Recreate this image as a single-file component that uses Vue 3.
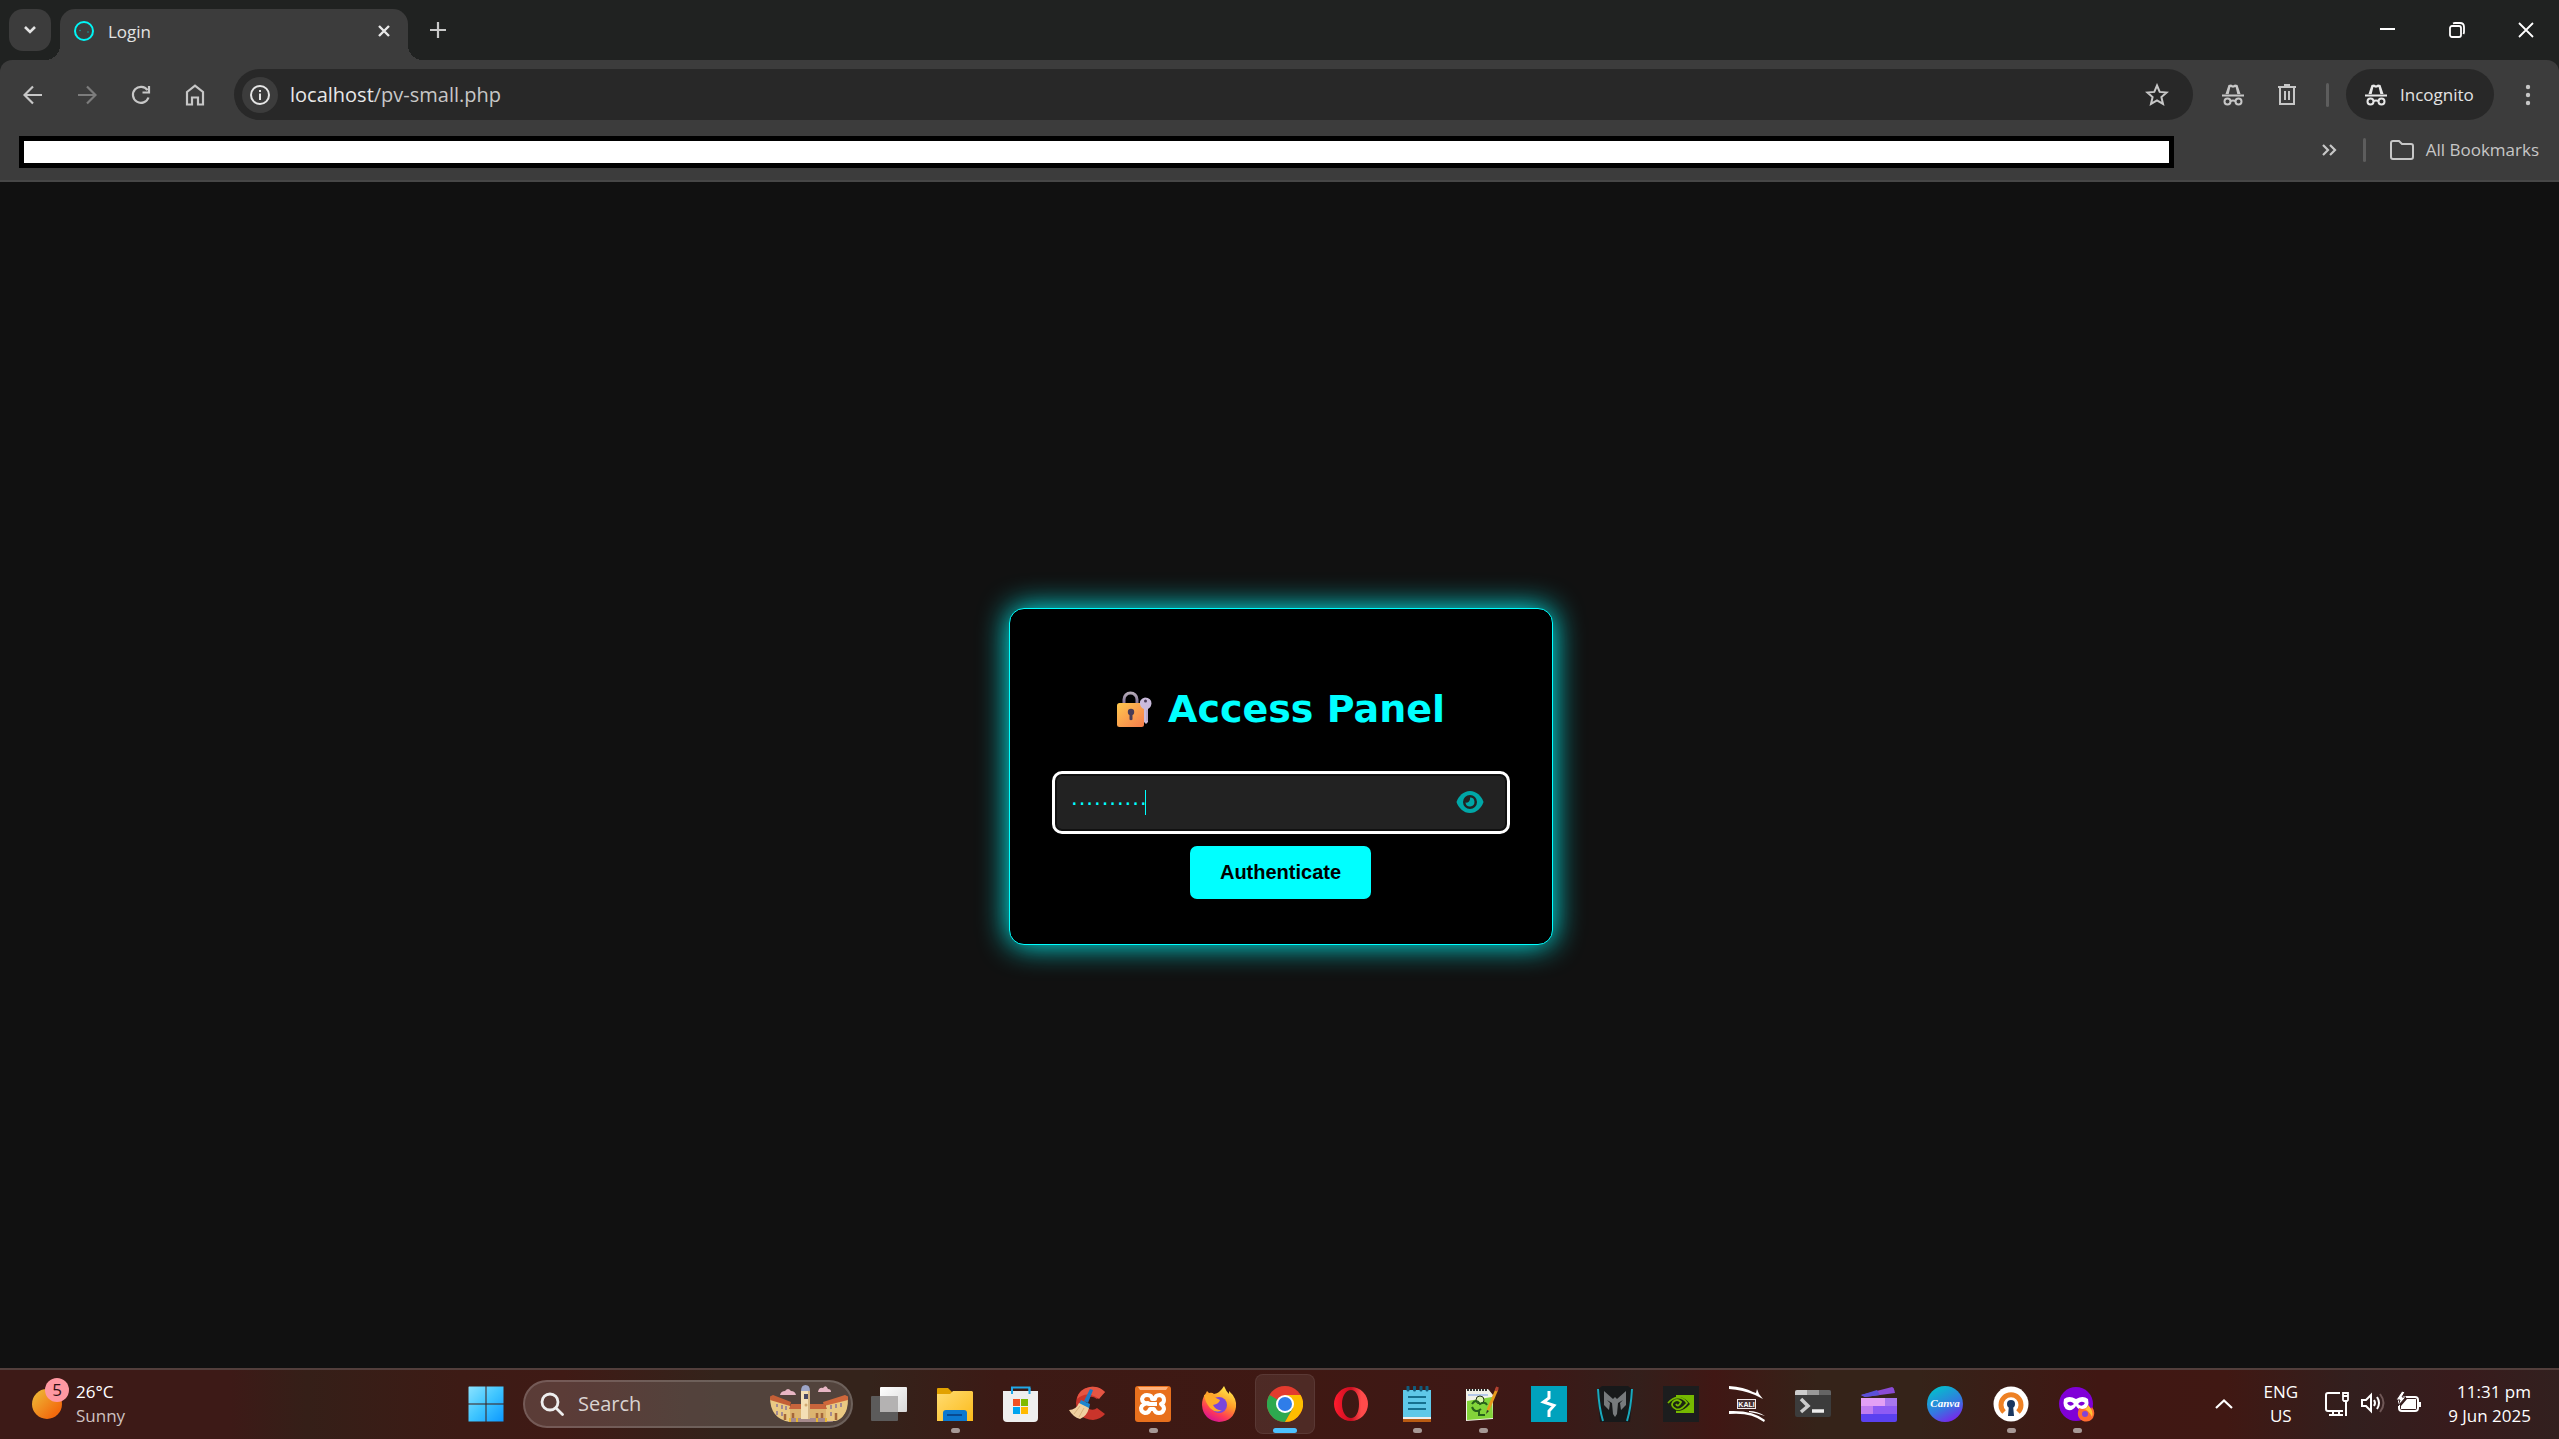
<script setup>
import { ref } from 'vue'

const passcode = ref('··········')
const apps = [
  { id: 'taskview', name: 'Task View' },
  { id: 'explorer', name: 'File Explorer', open: true },
  { id: 'store', name: 'Microsoft Store' },
  { id: 'ccleaner', name: 'CCleaner' },
  { id: 'xampp', name: 'XAMPP', open: true },
  { id: 'firefox', name: 'Firefox' },
  { id: 'chrome', name: 'Chrome', active: true },
  { id: 'opera', name: 'Opera' },
  { id: 'notepad', name: 'Notepad', open: true },
  { id: 'npp', name: 'Notepad++', open: true },
  { id: 'burp', name: 'Burp Suite' },
  { id: 'predator', name: 'PredatorSense' },
  { id: 'nvidia', name: 'NVIDIA' },
  { id: 'kali', name: 'Kali Linux' },
  { id: 'terminal', name: 'Terminal' },
  { id: 'clipchamp', name: 'Clipchamp' },
  { id: 'canva', name: 'Canva' },
  { id: 'openvpn', name: 'OpenVPN', open: true },
  { id: 'private', name: 'Firefox Private', open: true },
]
</script>

<template>
  <div class="screen">
    <header class="tabs">
      <button class="tab-search" aria-label="Search tabs">
        <svg width="14" height="10" viewBox="0 0 14 10"><path d="M2 2l5 5 5-5" fill="none" stroke="#e3e3e3" stroke-width="2.6" /></svg>
      </button>
      <div class="tab">
        <svg width="22" height="22" viewBox="0 0 22 22">
          <circle cx="11" cy="11" r="9" fill="none" stroke="#00f5f5" stroke-width="2" />
          <circle cx="7" cy="10.500" r="0.800" fill="#14a3a3" /><circle cx="15" cy="12" r="0.800" fill="#14a3a3" />
        </svg>
        <span class="tab-title">Login</span>
        <button class="plain" aria-label="Close tab">
          <svg width="14" height="14" viewBox="0 0 14 14"><path d="M2 2l10 10M12 2L2 12" stroke="#e8e8e8" stroke-width="2.400" /></svg>
        </button>
      </div>
      <button class="plain new-tab" aria-label="New tab">
        <svg width="16" height="16" viewBox="0 0 16 16"><path d="M8 0v16M0 8h16" stroke="#c9c9c9" stroke-width="2.200" /></svg>
      </button>
      <div class="window-buttons">
        <button class="plain" aria-label="Minimize"><svg width="16" height="16" viewBox="0 0 16 16"><path d="M0 7h15" stroke="#fff" stroke-width="2" /></svg></button>
        <button class="plain" aria-label="Restore">
          <svg width="16" height="16" viewBox="0 0 16 16" fill="none" stroke="#fff" stroke-width="1.800"><rect x="1" y="4" width="11" height="11" rx="2" /><path d="M4 1.500Q5 1 6 1h5q4 0 4 4v5q0 1-.6 2" /></svg>
        </button>
        <button class="plain" aria-label="Close"><svg width="16" height="16" viewBox="0 0 16 16"><path d="M1 1l14 14M15 1L1 15" stroke="#fff" stroke-width="1.800" /></svg></button>
      </div>
    </header>

    <nav class="toolbar">
      <div class="nav-icons">
        <button class="plain" aria-label="Back"><svg width="20" height="20" viewBox="0 0 20 20" fill="none" stroke="#c7c7c7" stroke-width="2.200"><path d="M19 10H2M10 1.500L1.500 10l8.500 8.500" /></svg></button>
        <button class="plain" aria-label="Forward"><svg width="20" height="20" viewBox="0 0 20 20" fill="none" stroke="#7c7c7c" stroke-width="2.200"><path d="M1 10h17M10 1.500l8.500 8.500-8.500 8.500" /></svg></button>
        <button class="plain" aria-label="Reload"><svg width="20" height="20" viewBox="0 0 20 20" fill="none" stroke="#c7c7c7" stroke-width="2.200"><path d="M17.500 12.500A8 8 0 1 1 16.500 5.200M18 1v6.500h-6.500" /></svg></button>
        <button class="plain" aria-label="Home"><svg width="20" height="22" viewBox="0 0 20 22" fill="none" stroke="#c7c7c7" stroke-width="2.200"><path d="M2 8l8-6.300L18 8v12.500h-5v-7H7v7H2z" /></svg></button>
      </div>
      <label class="omnibox">
        <span class="site-info">
          <svg width="22" height="22" viewBox="0 0 22 22"><circle cx="11" cy="11" r="9" fill="none" stroke="#e6e6e6" stroke-width="2" /><path d="M11 9.500V16M11 6v2" stroke="#e6e6e6" stroke-width="2" /></svg>
        </span>
        <span class="url"><b>localhost</b>/pv-small.php</span>
        <svg width="24" height="24" viewBox="0 0 24 24"><path d="M12 2.500l2.700 6.400 7 .6-5.300 4.600 1.600 6.800-6-3.600-6 3.600 1.600-6.800L2.300 9.500l7-.6z" fill="none" stroke="#c7c7c7" stroke-width="2" /></svg>
      </label>
      <div class="tools">
        <svg width="24" height="22" viewBox="0 0 24 22" fill="#c7c7c7"><path d="M1 10.500h22v2H1zM4.500 10l3-9L10 .5l2 1 2-1 2.500.5 3 9h-3.200L14.600 3l-2.600.8L9.400 3 7.700 10z" /><g fill="none" stroke="#c7c7c7" stroke-width="2"><circle cx="6.500" cy="17.500" r="3" /><circle cx="17.500" cy="17.500" r="3" /><path d="M9.500 17q2.500-1.200 5 0" /></g></svg>
        <svg width="20" height="24" viewBox="0 0 20 24" fill="none" stroke="#c7c7c7" stroke-width="2"><path d="M1 4h18M7 2h6M3 4v17h14V4M8 8v9M12 8v9" /></svg>
      </div>
      <i class="rule"></i>
      <button class="incognito">
        <svg width="24" height="22" viewBox="0 0 24 22" fill="#e8e8e8"><path d="M1 10.500h22v2H1zM4.500 10l3-9L10 .5l2 1 2-1 2.500.5 3 9h-3.200L14.600 3l-2.600.8L9.400 3 7.700 10z" /><g fill="none" stroke="#e8e8e8" stroke-width="2"><circle cx="6.500" cy="17.500" r="3" /><circle cx="17.500" cy="17.500" r="3" /><path d="M9.500 17q2.500-1.200 5 0" /></g></svg>
        Incognito
      </button>
      <button class="plain menu" aria-label="Menu"><svg width="6" height="24" viewBox="0 0 6 24" fill="#c7c7c7"><circle cx="3" cy="4" r="2.200" /><circle cx="3" cy="12" r="2.200" /><circle cx="3" cy="20" r="2.200" /></svg></button>
    </nav>

    <div class="bookmarks">
      <div class="bookmark-items"></div>
      <svg class="more" width="16" height="14" viewBox="0 0 16 14"><path d="M2 2l5 5-5 5M9 2l5 5-5 5" fill="none" stroke="#c7c7c7" stroke-width="2.200" /></svg>
      <i class="rule"></i>
      <a href="#" class="all-bookmarks">
        <svg width="26" height="20" viewBox="0 0 26 20"><path d="M2 3q0-2 2-2h6l3 3h9q2 0 2 2v11q0 2-2 2H4q-2 0-2-2z" fill="none" stroke="#c7c7c7" stroke-width="2" /></svg>
        All Bookmarks
      </a>
    </div>

    <main class="page">
      <form class="card" @submit.prevent>
        <h1>
          <svg width="36" height="36" viewBox="0 0 36 36">
            <defs>
              <linearGradient id="lockBody" x1="0" y1="0" x2="1" y2="1"><stop offset="0" stop-color="#ffc84e" /><stop offset="1" stop-color="#f57c4d" /></linearGradient>
              <linearGradient id="shackle" x1="0" y1="0" x2="0" y2="1"><stop offset="0" stop-color="#b5aab7" /><stop offset="1" stop-color="#7c6b91" /></linearGradient>
            </defs>
            <path d="M8 13V8.500a6.500 6.500 0 0 1 13 0V13" fill="none" stroke="url(#shackle)" stroke-width="3" />
            <rect x="1" y="12" width="27" height="24" rx="2.500" fill="url(#lockBody)" />
            <circle cx="15" cy="21" r="3.200" fill="#483b57" /><path d="M13.500 22h3v6.500q-1.500 1.500-3 0z" fill="#483b57" />
            <path d="M24 13q-1-5 5-6.500 6.500.5 6.500 6-.5 4-3.500 5.500V31l-2 2-2-2V18Q24.500 16.500 24 13z" fill="#cabbdc" /><circle cx="29.500" cy="10" r="1.500" fill="#4a3c58" /><path d="M31 19v11" stroke="#a899bd" />
          </svg>
          <span>Access Panel</span>
        </h1>
        <div class="field">
          <input v-model="passcode" type="text" aria-label="Password" autocomplete="off" />
          <i class="caret"></i>
          <button type="button" class="plain eye" aria-label="Show password">
            <svg width="28" height="24" viewBox="0 0 28 24"><path d="M14 1C7.500 1 2.500 6 .5 12c2 6 7 11 13.500 11s11.500-5 13.500-11C25.500 6 20.500 1 14 1z" fill="#00a7a7" /><circle cx="14" cy="12" r="7" fill="#222" /><path d="M14 7.500a4.500 4.500 0 1 1-4.500 5c3 .8 5-2 4.500-5z" fill="#00a7a7" /></svg>
          </button>
        </div>
        <button class="submit" type="submit">Authenticate</button>
      </form>
    </main>

    <footer class="taskbar">
      <div class="weather">
        <span class="sun"><b>5</b></span>
        <div><p>26°C</p><p class="dim">Sunny</p></div>
      </div>

      <div class="dock">
        <button class="app" aria-label="Start">
          <svg width="36" height="36" viewBox="0 0 36 36"><defs><linearGradient id="win" x1="0" y1="0" x2="1" y2="1"><stop offset="0" stop-color="#8be3ff" /><stop offset=".5" stop-color="#3fc5ff" /><stop offset="1" stop-color="#0c98ff" /></linearGradient></defs><path fill="url(#win)" d="M1 .5h16.500v17H.5V1zM18.500.5h17v17h-17zM.5 18.500h17v17H.5zM18.500 18.500h17v17h-17z" /></svg>
        </button>
        <label class="search">
          <svg width="24" height="24" viewBox="0 0 24 24" fill="none" stroke="#eee" stroke-width="2.800"><circle cx="10" cy="10" r="8" /><path d="M16 16l6.500 6.500" stroke-linecap="round" /></svg>
          <input type="text" placeholder="Search" aria-label="Search" />
          <svg width="78" height="38" viewBox="0 0 78 38">
            <defs><clipPath id="pill"><path d="M0 0h78v14q0 22-18 23H20Q0 34 0 12z" /></clipPath></defs>
            <path d="M10 10q1-4 5-4 3-4 6 0 4 0 5 4zM48 7q1-5 5-4 3-4 5 1 3 0 3 3z" fill="#e7b6c4" />
            <g clip-path="url(#pill)">
              <path d="M18 33h45v6H18z" fill="#a68a8c" />
              <path d="M0 13l20 6v18H8L0 24z" fill="#eac983" /><path d="M-1 12l4-2 18 7-1 4-20-6z" fill="#c45f36" />
              <path d="M78 13l-22 6v17h14l8-12z" fill="#eac983" /><path d="M79 12l-4-2-22 7 1 4 24-6z" fill="#d0683b" />
              <path d="M20 23h36v10H20z" fill="#dcb470" /><path d="M21 19h34l2 5H19z" fill="#c8653c" />
              <path d="M31 6h9v28h-9z" fill="#f4dfb5" /><path d="M38 6h2v28h-2z" fill="#d6b683" /><path d="M31 6q0-6 4.500-6T40 6z" fill="#9da5c7" />
              <path d="M34 9h4v5h-4z" fill="#4a4962" /><circle cx="36" cy="20" r="1.500" fill="#d2aa72" />
              <path d="M7 19v3M12 20v4M16 21v4M7 26v4M12 27v4M61 20v4M66 19v4M71 18v4M61 27v4" stroke="#8b7597" stroke-width="1.500" />
              <path d="M15 29v6M66 28v7M23 28v5M47 28v5M52 28v5" stroke="#a4673a" stroke-width="2.500" /><path d="M20 33v5M27 33v5M47 33v5M56 33v5" stroke="#e5b632" stroke-width="2" />
            </g>
          </svg>
        </label>

        <button v-for="app in apps" :key="app.id" class="app" :class="{ active: app.active, open: app.open }" :aria-label="app.name">
          <svg width="36" height="36" viewBox="0 0 36 36">
            <template v-if="app.id === 'taskview'">
              <defs><linearGradient id="tv" x1="0" y1="0" x2="1" y2="1"><stop offset="0" stop-color="#fff" /><stop offset="1" stop-color="#d9d9d9" /></linearGradient></defs>
              <rect x="9" y="1" width="27" height="25" rx="1" fill="url(#tv)" /><rect y="10" width="27" height="25" rx="1" fill="#5c5b5b" /><path d="M9 10h18v16H9z" fill="#b4b2b2" />
            </template>
            <template v-else-if="app.id === 'explorer'">
              <defs><linearGradient id="fd" x1="0" y1="0" x2="1" y2="1"><stop offset="0" stop-color="#ffdc72" /><stop offset="1" stop-color="#fcba19" /></linearGradient></defs>
              <path d="M0 3q0-1 1-1h10l4 4v4H0z" fill="#e2a100" /><path d="M0 8h13l3-3h19l1 1v29H0z" fill="url(#fd)" /><path d="M6 35v-8q0-3 3-3h18q3 0 3 3v8z" fill="#0c78cf" /><path d="M10 29h15" stroke="#084a91" stroke-width="2" />
            </template>
            <template v-else-if="app.id === 'store'">
              <path d="M9 7V1.500h17.500V7" fill="none" stroke="#20a8e8" stroke-width="2" /><path d="M0 5h35v27q0 4-4 4H4q-4 0-4-4z" fill="#efefef" /><path d="M9 2v6M26.500 2v6" stroke="#20a8e8" stroke-width="2" />
              <path d="M10 13h7v7h-7z" fill="#f25022" /><path d="M18 13h7v7h-7z" fill="#7fba00" /><path d="M10 21h7v7h-7z" fill="#00a4ef" /><path d="M18 21h7v7h-7z" fill="#ffb900" />
            </template>
            <template v-else-if="app.id === 'ccleaner'">
              <path d="M36 6Q30 0 21 1 8 3 7 17q1 16 17 17 8-1 12-6l-8-6q-3 3-8 1-5-3-3-9 4-6 11-1z" fill="#c9342b" /><path d="M36 6Q30 0 21 1 10 3 8 13q10-9 22 0z" fill="#e55543" />
              <path d="M21 3l3 1-5 13-4-2z" fill="#1d79c4" /><path d="M12 14l9 4-1 5-10-5z" fill="#1e86cf" /><path d="M10 17l10 5q-2 8-9 11Q4 31 0 24q7 0 10-7z" fill="#f0cfa0" /><path d="M11 20l-6 8M15 22l-5 9" stroke="#d9b27c" />
            </template>
            <template v-else-if="app.id === 'xampp'">
              <rect width="36" height="36" rx="3" fill="#e8701d" /><path d="M3 1h30l-2 3H5z" fill="#ffb37d" />
              <path d="M14 18h8M14 18q-7-1-7-5 1-4 5-4 5 0 5 4h3q0-4 5-4 4 1 4 5 0 3-3 4 3 2 3 5-1 4-5 4-4 0-5-4h-4q-1 4-5 4-4-1-4-5 1-4 7-5z" fill="none" stroke="#fff" stroke-width="4" stroke-linejoin="round" />
            </template>
            <template v-else-if="app.id === 'firefox'">
              <defs><linearGradient id="fx" x1=".8" y1="0" x2=".3" y2="1"><stop offset="0" stop-color="#fff44f" /><stop offset=".45" stop-color="#ff9a28" /><stop offset=".75" stop-color="#ff3a55" /><stop offset="1" stop-color="#d3109b" /></linearGradient></defs>
              <path d="M23 0q2 5 5 8V5q8 7 7 16-2 14-17 15Q2 34 1 19 1 12 5 7l1-2 2 2q3-1 5 1 6-1 10-8z" fill="url(#fx)" /><circle cx="18" cy="19" r="8" fill="#7b45dd" /><path d="M3 9q6-2 10 2l6 3q-1 4-7 5 3 6 9 5-6 4-12-2Q4 16 3 9z" fill="#ffaa29" />
            </template>
            <template v-else-if="app.id === 'chrome'">
              <circle cx="18" cy="18" r="18" fill="#e33b2e" /><path d="M18 18L2.400 9a18 18 0 0 0 15.600 27l7.800-13.500z" fill="#2da94f" /><path d="M18 9h15.600A18 18 0 0 1 18 36l7.800-13.500z" fill="#fdbd00" /><circle cx="18" cy="18" r="9" fill="#fff" /><circle cx="18" cy="18" r="7" fill="#2f7de9" />
            </template>
            <template v-else-if="app.id === 'opera'">
              <defs><linearGradient id="op" x1="0" y1="0" x2="1" y2="0"><stop offset="0" stop-color="#ff1b2d" /><stop offset=".5" stop-color="#c90d20" /><stop offset=".8" stop-color="#ff4b4b" /></linearGradient></defs>
              <path fill="url(#op)" fill-rule="evenodd" d="M18 1a17 17 0 1 0 0 34 17 17 0 0 0 0-34zm0 3c5 0 8 6 8 14s-3 14-8 14S9 26 9 18 13 4 18 4z" />
            </template>
            <template v-else-if="app.id === 'notepad'">
              <path d="M4 4h28v28H4z" fill="#5fc8e8" /><path d="M4 31h28v3H4z" fill="#eee" /><path d="M4 33h28v3H4z" fill="#ba5b12" /><path d="M9 1v3M15.500 1v3M22 1v3M28 1v3" stroke="#115c7d" stroke-width="3" stroke-linecap="round" /><path d="M9 11h18M9 17h18M9 23h18" stroke="#16708f" stroke-width="2" />
            </template>
            <template v-else-if="app.id === 'npp'">
              <path d="M1 3h22l5 6v24L1 35z" fill="#f2f2e8" /><path d="M2 15l25-4 1 21-26 2z" fill="#83d43a" /><path d="M2 4h20" stroke="#333" stroke-dasharray="2 1" stroke-width="2" /><path d="M3 9h20" stroke="#b5c8e8" stroke-width="2" /><circle cx="15" cy="14" r="4" fill="#dff5b0" stroke="#263319" /><path d="M7 18q4-6 8 0 5-3 7 1M7 21q3 7 9 2M14 25v4h6" fill="none" stroke="#27611b" stroke-width="2" /><path d="M23 24L32 3" stroke="#e69a1c" stroke-width="3" /><path d="M31 5l1.500-4" stroke="#b34131" stroke-width="3" /><path d="M21 28l1-4 2 1z" fill="#332" />
            </template>
            <template v-else-if="app.id === 'burp'">
              <path d="M0 0h36v36H0z" fill="#00a2bd" /><path d="M18 5v7l-5.500 4 10.500 3.500-5 5.500v6" fill="none" stroke="#fff" stroke-width="3" />
            </template>
            <template v-else-if="app.id === 'predator'">
              <path d="M5 0h26l5 4-3 32H3L0 4z" fill="#17191a" /><path d="M1 3q1 19 5 32M35 3q-1 19-5 32" fill="none" stroke="#19a9bd" stroke-width="2" /><path d="M7 5l9 8 2-2 2 2 9-8v14l-5 5-1-7 3-3-5 3-1 11-2 3-2-3-1-11-5-3 3 3-1 7-5-5z" fill="#777b7d" />
            </template>
            <template v-else-if="app.id === 'nvidia'">
              <path d="M0 0h36v36H0z" fill="#1c1d1e" /><path d="M13 9h18v18H13z" fill="#76b900" /><path d="M4 17q6-7 12-6 7 1 11 7-6 7-12 7-8-1-11-8z" fill="#1c2412" /><path d="M5 17q7-8 15-4 3 2 4 4-6 8-11 6-6-3-3-7 4-4 8 0-3 6-5 2" fill="none" stroke="#76b900" stroke-width="1.800" />
            </template>
            <template v-else-if="app.id === 'kali'">
              <path d="M0 0q15 1 24 6l3 1 1-4 2 5 4 5-8-4Q14 4 0 3zM0 25q24-1 36 9l-1 2Q22 26 0 28zM20 25q8 0 16 5-8-3-16-4z" fill="#fff" /><rect x="8.500" y="13.500" width="18" height="9" fill="#463133" stroke="#f2e9e9" /><text x="17.500" y="21" fill="#fff" font-size="7" font-weight="700" text-anchor="middle">KALI</text>
            </template>
            <template v-else-if="app.id === 'terminal'">
              <rect y="4" width="36" height="27" rx="2" fill="#3c3c3c" /><path d="M0 9V6q0-2 2-2h10v5z" fill="#ccc" /><path d="M12 4h12v5H12z" fill="#999" /><path d="M24 4h10q2 0 2 2v3H24z" fill="#656565" /><path d="M6 13l7 7-7 6" fill="none" stroke="#ccc" stroke-width="3.500" /><path d="M17 25h12" stroke="#eee" stroke-width="3.500" />
            </template>
            <template v-else-if="app.id === 'clipchamp'">
              <path d="M0 9L31 1q2 0 3 6L4 11z" fill="#8a4bd5" /><path d="M0 9l16-5 3 5-15 2z" fill="#5a50d8" /><path d="M0 12h36v8H0z" fill="#a877f0" /><path d="M0 12h24v8H0z" fill="#e3a0f5" /><path d="M0 20h36v8H0z" fill="#8e5bf4" /><path d="M0 20h12v8H0z" fill="#c07df0" /><path d="M0 28h36v6q0 2-2 2H2q-2 0-2-2z" fill="#5a41f0" />
            </template>
            <template v-else-if="app.id === 'canva'">
              <defs><linearGradient id="cv" x1=".2" y1="0" x2=".7" y2="1"><stop offset="0" stop-color="#00c4cc" /><stop offset=".6" stop-color="#3577df" /><stop offset="1" stop-color="#7b22ec" /></linearGradient></defs>
              <circle cx="18" cy="18" r="18" fill="url(#cv)" /><text class="script" x="18" y="21" fill="#fff" font-size="11" text-anchor="middle">Canva</text>
            </template>
            <template v-else-if="app.id === 'openvpn'">
              <circle cx="18" cy="18" r="17.500" fill="#fff" /><path d="M11 26a10 10 0 1 1 14 0" fill="none" stroke="#ee8124" stroke-width="5" /><circle cx="18" cy="18" r="4" fill="#19365f" /><path d="M16 19h4l1 11h-6z" fill="#19365f" />
            </template>
            <template v-else>
              <circle cx="17" cy="18" r="17" fill="#8000d7" /><path d="M5 13q5-4 12 0 7-4 12 0 2 9-4 11-5 1-8-4-3 5-8 4-6-2-4-11z" fill="#fff" /><path d="M8 17q4-3 7 1-4 4-7-1zM19 18q3-4 7-1-3 5-7 1z" fill="#8000d7" /><path d="M29 19l3 4 1-2q4 5 1 11-4 5-10 3-6-3-5-9l1-4 3 1q5 0 6-4z" fill="#ff6b31" /><path d="M29 19q6 6 4 12-4-8-9-8 5 0 5-4z" fill="#ffc236" /><circle cx="26" cy="28" r="3" fill="#8144d8" />
            </template>
          </svg>
        </button>
      </div>

      <div class="tray">
        <svg width="20" height="12" viewBox="0 0 20 12"><path d="M2 10l8-7.500 8 7.500" fill="none" stroke="#fff" stroke-width="2.200" /></svg>
        <div class="lang"><p>ENG</p><p>US</p></div>
        <div class="status">
          <svg width="26" height="26" viewBox="0 0 26 26" fill="none" stroke="#fff" stroke-width="2"><path d="M16 2H4Q2 2 2 4v14q0 2 2 2h15M9 20v4M15 20v4M5 24h14M22 11v14" /><path d="M19 2h5v7l-1 1h-3l-1-1zM19 5h5" stroke-width="1.800" /></svg>
          <svg width="26" height="24" viewBox="0 0 26 24" fill="none" stroke="#fff" stroke-width="2"><path d="M2 9h4l5-5v16l-5-5H2zM14 9q2 3 0 6M17 6q4 6 0 12" /><path d="M20 3q7 9 0 18" stroke="#6f5756" /></svg>
          <svg width="26" height="24" viewBox="0 0 26 24"><rect x="3" y="6" width="19" height="14" rx="3" fill="none" stroke="#fff" stroke-width="2" /><path d="M5 18v-3l6-7h9v10zM23 11h2v5h-2z" fill="#fff" /><path d="M6 0L0 9h4l-2 6 8-9H6l3-5z" fill="#fff" stroke="#331d1e" /></svg>
        </div>
        <div class="clock"><p>11:31 pm</p><p>9 Jun 2025</p></div>
      </div>
    </footer>
  </div>
</template>

<style>
body { margin: 0; background: #111; }
</style>

<style scoped>
* { box-sizing: border-box; }
.screen { min-height: 100vh; display: flex; flex-direction: column; font-family: "Open Sans", "Noto Sans", sans-serif; font-size: 17px; line-height: 24px; color: #e3e3e3; background: #202221; }
svg { display: block; flex: none; }
p { margin: 0; }
button { font: inherit; color: inherit; }
.plain { border: 0; padding: 0; background: none; display: flex; align-items: center; justify-content: center; }

.tabs { height: 60px; display: flex; align-items: flex-start; padding: 9px 18px 0 9px; }
.tab-search { width: 42px; height: 42px; border: 0; border-radius: 14px; background: #3c3c3c; display: grid; place-items: center; padding: 0; }
.tab { position: relative; width: 348px; height: 51px; margin-left: 9px; padding: 0 17px 8px 13px; border-radius: 15px 15px 0 0; background: #3c3c3c; display: flex; align-items: center; }
.tab::before, .tab::after { content: ""; position: absolute; bottom: 0; width: 15px; height: 15px; }
.tab::before { right: 100%; background: radial-gradient(circle at 0 0, transparent 15px, #3c3c3c 15px); }
.tab::after { left: 100%; background: radial-gradient(circle at 100% 0, transparent 15px, #3c3c3c 15px); }
.tab-title { flex: 1; margin-left: 13px; padding-top: 2px; }
.new-tab { width: 60px; height: 42px; }
.window-buttons { margin-left: auto; display: flex; gap: 53px; padding: 13px 7px 0 0; }

.toolbar { height: 69px; display: flex; align-items: center; padding: 0 28px 0 23px; background: #3c3c3c; border-radius: 12px 12px 0 0; }
.nav-icons { display: flex; gap: 34px; align-items: center; }
.omnibox { flex: 1; height: 51px; margin-left: 29px; padding: 0 24px 0 8px; border-radius: 26px; background: #282828; display: flex; align-items: center; }
.site-info { width: 36px; height: 36px; border-radius: 18px; background: #3c3c3c; display: grid; place-items: center; }
.url { flex: 1; margin-left: 12px; font-size: 20px; color: #c7c7c7; }
.url b { font-weight: 400; color: #e8e8e8; }
.tools { display: flex; align-items: center; gap: 32px; margin: 0 29px 0 28px; }
.rule { width: 3px; height: 24px; border-radius: 2px; background: #5d5d5d; }
.incognito { height: 51px; width: 148px; margin-left: 17px; padding: 0 18px; border: 0; border-radius: 26px; background: #282828; display: flex; align-items: center; gap: 12px; }
.menu { margin-left: 31px; }

.bookmarks { height: 53px; display: flex; align-items: center; padding: 0 20px 10px 19px; background: #3c3c3c; border-bottom: 2px solid #474747; }
.bookmark-items { flex: 1; height: 32px; margin-top: 5px; border: 5px solid #000; background: #fff; }
.more { margin: 0 26px 0 147px; }
.all-bookmarks { display: flex; align-items: center; gap: 11px; margin-left: 23px; color: #c7c7c7; text-decoration: none; }

.page { flex: 1; display: flex; align-items: center; justify-content: center; background: #111; padding: 2px 0 0 2px; }
.card { width: 544px; padding: 45px; border: 1px solid #0ff; border-radius: 15px; background: #000; box-shadow: 0 0 30px #0ff; display: flex; flex-direction: column; align-items: center; }
h1 { margin: 30px 0 40px; display: flex; align-items: center; gap: 16px; color: #0ff; font: 700 38px/50px "DejaVu Sans", sans-serif; }
.field { position: relative; width: 100%; }
.field input { display: block; width: 100%; height: 57px; padding: 0 60px 0 14px; border: 2px solid #111; border-radius: 7px; outline: 3px solid #fff; background: #222; color: #0ff; font: 23px/24px "Liberation Sans", sans-serif; }
.caret { position: absolute; left: 90px; top: 16px; width: 1px; height: 25px; background: #0ff; }
.eye { position: absolute; right: 23px; top: 16px; }
.submit { margin-top: 15px; padding: 0 30px; height: 53px; border: 0; border-radius: 7px; background: #0ff; color: #000; font: 700 20px/24px "Liberation Sans", Arial, sans-serif; }

.taskbar { height: 71px; padding: 0 28px 2px 32px; border-top: 2px solid #533f3c; display: grid; grid-template-columns: 1fr auto 1fr; align-items: center; color: #fff; background: linear-gradient(90deg, #3d1a17 0%, #3d1a17 9%, #351f18 12%, #3d1b15 18%, #3f1a15 22%, #34231b 28%, #34231b 34%, #3c1a15 39%, #3f1813 51%, #3d1816 60%, #331f1b 64%, #401714 67%, #352319 71%, #352319 75%, #401713 82%, #401813 87%, #321f1e 92%, #381b1c 96%, #32201f 100%); }
.weather { display: flex; gap: 14px; align-items: center; }
.sun { position: relative; width: 30px; height: 30px; border-radius: 15px; background: linear-gradient(135deg, #edc03b, #f36a0d 80%); }
.sun b { position: absolute; left: 13px; top: -11px; width: 24px; height: 24px; border-radius: 12px; background: #ff98a2; color: #301014; font-weight: 400; text-align: center; }
.dim { color: #cfc2c0; }
.dock { display: flex; align-items: center; }
.app { position: relative; width: 60px; height: 60px; margin: 0 3px; padding: 0; border: 1px solid transparent; border-radius: 8px; background: none; display: grid; place-items: center; }
.app.active { background: rgba(255, 255, 255, 0.08); border-color: rgba(255, 255, 255, 0.07); }
.app.open::after, .app.active::after { content: ""; position: absolute; bottom: 0; left: 50%; width: 9px; margin-left: -4px; height: 5px; border-radius: 3px; background: #a79996; }
.app.active::after { width: 24px; margin-left: -12px; background: #4cc2ff; }
.app text { font-family: "Liberation Sans", sans-serif; }
.app .script { font-family: "Liberation Serif", serif; font-style: italic; font-weight: 700; }
.search { width: 330px; height: 48px; margin: 0 3px 0 4px; padding: 0 3px 0 15px; border: 2px solid rgba(255, 255, 255, 0.16); border-radius: 24px; background: rgba(255, 255, 255, 0.15); display: flex; align-items: center; gap: 14px; }
.search input { flex: 1; min-width: 0; padding: 0; border: 0; background: none; font: 20px/24px "Open Sans", sans-serif; color: #ddd; }
.search input::placeholder { color: #dad3d1; opacity: 1; }
.tray { display: flex; align-items: center; justify-content: flex-end; text-align: center; }
.lang { margin-left: 30px; }
.status { display: flex; gap: 10px; margin: 0 26px 0 26px; }
.clock { text-align: right; }
</style>
